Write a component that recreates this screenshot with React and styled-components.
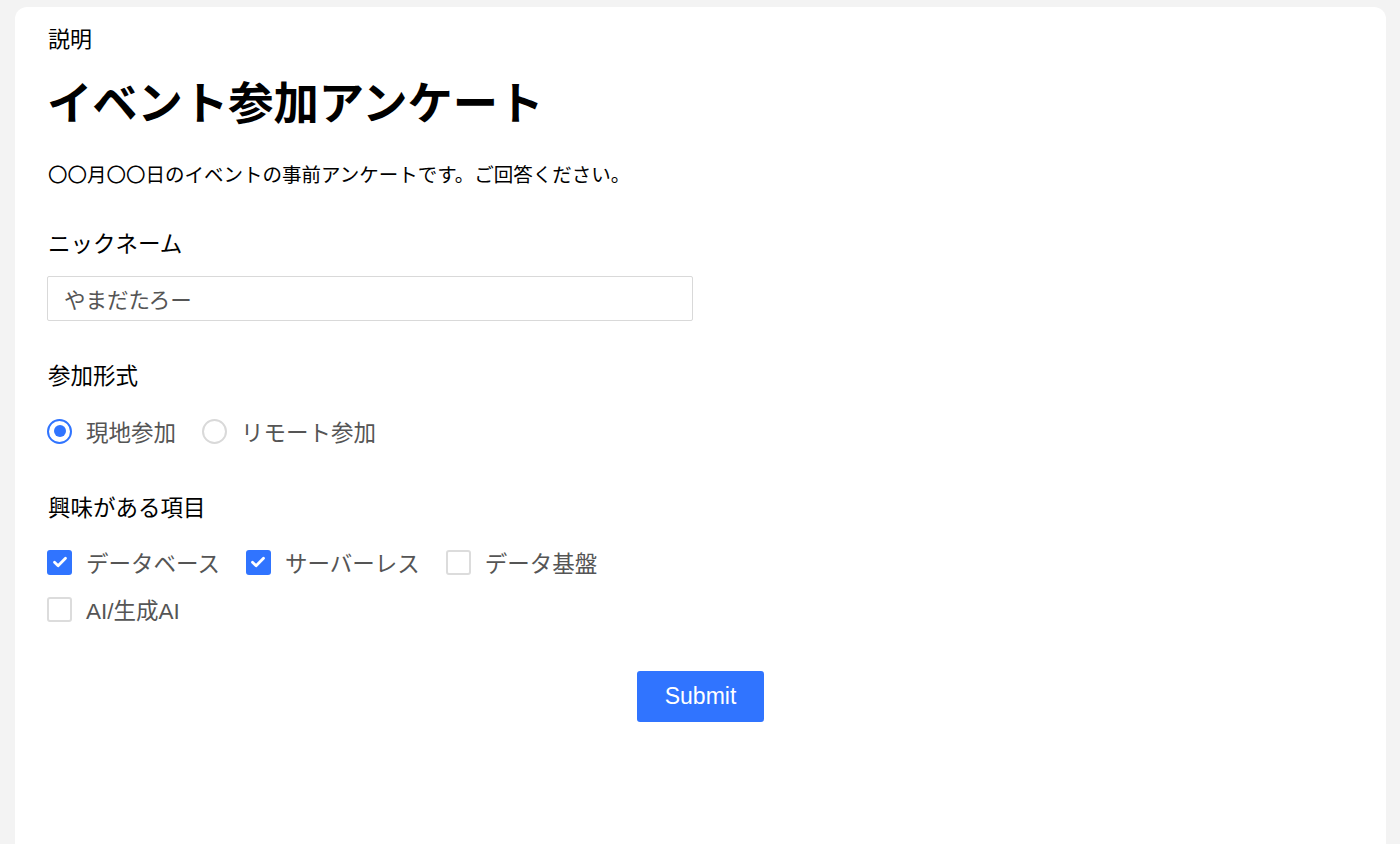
import React, { useState } from 'react'
import styled, { createGlobalStyle } from 'styled-components'

const GlobalStyle = createGlobalStyle`
  html, body {
    margin: 0;
    padding: 0;
    background: #f3f3f3;
  }
  body {
    font-family: "Liberation Sans", "Noto Sans CJK JP", sans-serif;
    color: #000;
  }
  * {
    box-sizing: border-box;
  }
`

const Card = styled.main`
  margin: 7px 14px 0 15px;
  min-height: 837px;
  background: #fff;
  border-radius: 12px 12px 0 0;
  padding: 19px 32px 40px;
  display: flex;
  flex-direction: column;
`

const Caption = styled.div`
  font-size: 22px;
  line-height: 28px;
  margin-left: 1px;
`

const Title = styled.h1`
  margin: 21px 0 0;
  font-size: 45.3px;
  line-height: 60px;
  font-weight: 700;
`

const Description = styled.p`
  margin: 26px 0 0 1px;
  font-size: 19.5px;
  line-height: 28px;
`

const Field = styled.section`
  margin-top: ${(p) => p.$top}px;
  display: flex;
  flex-direction: column;
`

const Label = styled.div`
  font-size: 22.5px;
  line-height: 30px;
  margin-left: 1px;
`

const TextInput = styled.input`
  margin-top: 16px;
  width: 646px;
  height: 45px;
  border: 1px solid #d9d9d9;
  border-radius: 2px;
  padding: 0 16px;
  font-family: inherit;
  font-size: 21.5px;
  color: #555;
  outline: none;
`

const OptionRow = styled.div`
  margin-top: ${(p) => p.$top}px;
  display: flex;
  flex-wrap: wrap;
  column-gap: 26px;
  row-gap: 17px;
  max-width: 600px;
`

const Option = styled.label`
  display: flex;
  align-items: center;
  gap: 14px;
  height: 30px;
  font-size: 22.5px;
  color: #555;
  cursor: pointer;
`

const RadioCircle = styled.span`
  width: 25px;
  height: 25px;
  border-radius: 50%;
  border: 2px solid ${(p) => (p.$on ? '#3074ff' : '#d9d9d9')};
  display: flex;
  align-items: center;
  justify-content: center;
  &::after {
    content: '';
    width: 12px;
    height: 12px;
    border-radius: 50%;
    background: ${(p) => (p.$on ? '#3074ff' : 'transparent')};
  }
`

const Box = styled.span`
  width: 25px;
  height: 25px;
  border-radius: 3px;
  border: ${(p) => (p.$on ? 'none' : '2px solid #dcdcdc')};
  background: ${(p) => (p.$on ? '#3074ff' : '#fff')};
  display: flex;
  align-items: center;
  justify-content: center;
`

const Actions = styled.div`
  margin-top: 47px;
  display: flex;
  justify-content: center;
`

const SubmitButton = styled.button`
  width: 127px;
  height: 51px;
  border: none;
  border-radius: 3px;
  background: #3074ff;
  color: #fff;
  font-family: "Liberation Sans", sans-serif;
  font-size: 23px;
  cursor: pointer;
`

const Check = () => (
  <svg width="18" height="18" viewBox="0 0 18 18" fill="none">
    <path d="M3.5 9.3l3.6 3.5L14.5 5.3" stroke="#fff" strokeWidth="2.8" strokeLinecap="round" strokeLinejoin="round" />
  </svg>
)

const interests = ['データベース', 'サーバーレス', 'データ基盤', 'AI/生成AI']

export default function App() {
  const [mode, setMode] = useState('現地参加')
  const [picked, setPicked] = useState(['データベース', 'サーバーレス'])

  const toggle = (item) =>
    setPicked((list) => (list.includes(item) ? list.filter((x) => x !== item) : [...list, item]))

  return (
    <>
      <GlobalStyle />
      <Card>
        <Caption>説明</Caption>
        <Title>イベント参加アンケート</Title>
        <Description>〇〇月〇〇日のイベントの事前アンケートです。ご回答ください。</Description>

        <Field $top={41}>
          <Label>ニックネーム</Label>
          <TextInput defaultValue="やまだたろー" />
        </Field>

        <Field $top={41}>
          <Label>参加形式</Label>
          <OptionRow $top={24}>
            {['現地参加', 'リモート参加'].map((m) => (
              <Option key={m} onClick={() => setMode(m)}>
                <RadioCircle $on={mode === m} />
                {m}
              </Option>
            ))}
          </OptionRow>
        </Field>

        <Field $top={48}>
          <Label>興味がある項目</Label>
          <OptionRow $top={23}>
            {interests.map((item) => {
              const on = picked.includes(item)
              return (
                <Option key={item} onClick={() => toggle(item)}>
                  <Box $on={on}>{on && <Check />}</Box>
                  {item}
                </Option>
              )
            })}
          </OptionRow>
        </Field>

        <Actions>
          <SubmitButton>Submit</SubmitButton>
        </Actions>
      </Card>
    </>
  )
}
